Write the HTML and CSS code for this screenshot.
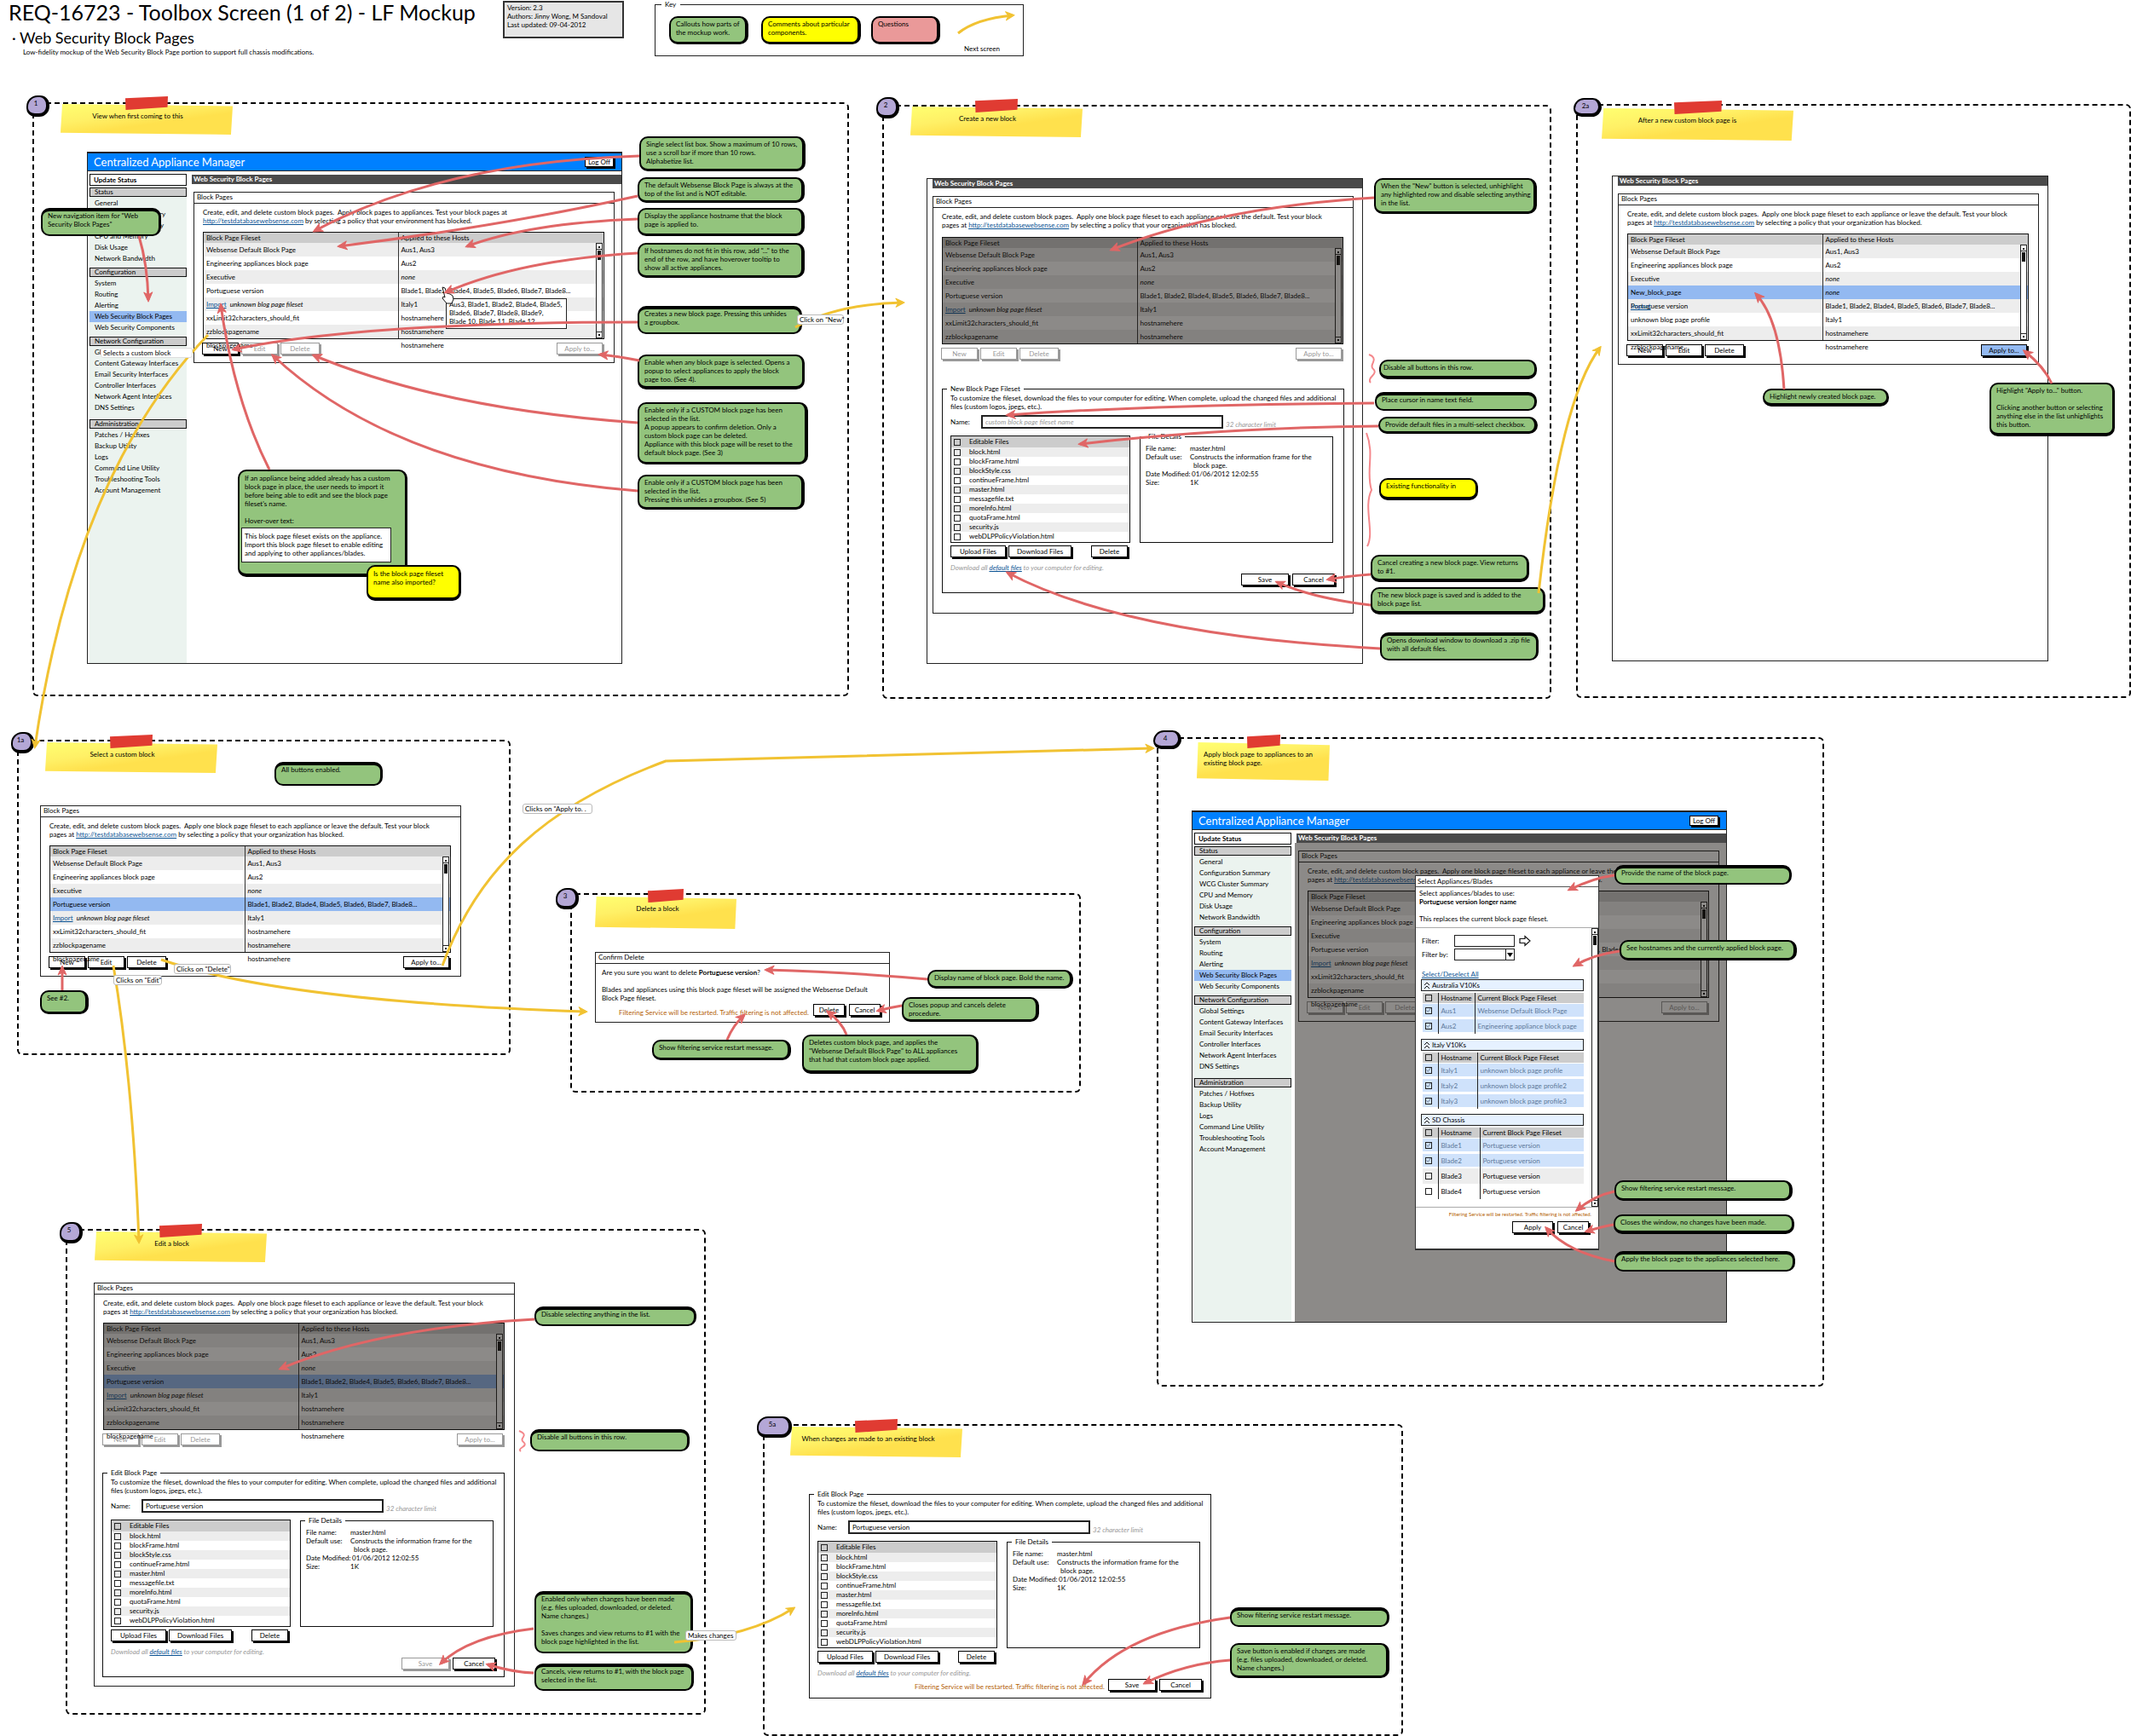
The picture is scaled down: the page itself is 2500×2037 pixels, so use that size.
FILE: index.html
```html
<!DOCTYPE html>
<html lang="en">
<head>
<meta charset="utf-8">
<title>REQ-16723 - Toolbox Screen (1 of 2) - LF Mockup</title>
<link rel="stylesheet" href="styles.css">
</head>
<body>
<div class="board">

<header class="masthead">
  <div class="titles">
    <h1>REQ-16723 - Toolbox Screen (1 of 2) - LF Mockup</h1>
    <h2>· Web Security Block Pages</h2>
    <p>Low-fidelity mockup of the Web Security Block Page portion to support full chassis modifications.</p>
  </div>
  <div class="version">Version: 2.3<br>Authors: Jinny Wong, M Sandoval<br>Last updated: 09-04-2012</div>
  <fieldset class="key">
    <legend>Key</legend>
    <div class="note key-a">Callouts how parts of<br>the mockup work.</div>
    <div class="note yellow key-b">Comments about particular<br>components.</div>
    <div class="note pink key-c">Questions</div>
    <div class="key-next">Next screen</div>
  </fieldset>
</header>

<!-- Step 1 -->
<section>
  <div class="frame f1"></div>
  <div class="sticky st1">View when first coming to this</div>
  <div class="badge b1">1</div>

  <div class="win app w1">
    <header class="app-head"><h3>Centralized Appliance Manager</h3><button class="btn">Log Off</button></header>
    <div class="app-body">
      <nav class="side">
        <div class="update">Update Status</div>
        <h4>Status</h4>
        <ul><li><a href="#">General</a></li><li><a href="#">Configuration Summary</a></li><li><a href="#">WCG Cluster Summary</a></li><li><a href="#">CPU and Memory</a></li><li><a href="#">Disk Usage</a></li><li><a href="#">Network Bandwidth</a></li></ul>
        <h4>Configuration</h4>
        <ul><li><a href="#">System</a></li><li><a href="#">Routing</a></li><li><a href="#">Alerting</a></li><li class="on"><a href="#">Web Security Block Pages</a></li><li><a href="#">Web Security Components</a></li></ul>
        <h4>Network Configuration</h4>
        <ul><li><a href="#">Global Settings</a></li><li><a href="#">Content Gateway Interfaces</a></li><li><a href="#">Email Security Interfaces</a></li><li><a href="#">Controller Interfaces</a></li><li><a href="#">Network Agent Interfaces</a></li><li><a href="#">DNS Settings</a></li></ul>
        <h4 class="admin">Administration</h4>
        <ul><li><a href="#">Patches / Hotfixes</a></li><li><a href="#">Backup Utility</a></li><li><a href="#">Logs</a></li><li><a href="#">Command Line Utility</a></li><li><a href="#">Troubleshooting Tools</a></li><li><a href="#">Account Management</a></li></ul>
      </nav>
      <div class="content">
        <div class="bar">Web Security Block Pages</div>
        <div class="panel">
          <h4>Block Pages</h4>
          <div class="panel-body">
            <p class="intro">Create, edit, and delete custom block pages.&nbsp; Apply block pages to appliances. Test your block pages at<br><a href="#">http://testdatabasewebsense.com</a> by selecting a policy that your environment has blocked.</p>
            <div class="listbox">
              <table>
                <thead><tr><th>Block Page Fileset</th><th>Applied to these Hosts</th></tr></thead>
                <tbody>
                  <tr><td>Websense Default Block Page</td><td>Aus1, Aus3</td></tr>
                  <tr><td>Engineering appliances block page</td><td>Aus2</td></tr>
                  <tr><td>Executive</td><td><i>none</i></td></tr>
                  <tr><td>Portuguese version</td><td>Blade1, Blade2, Blade4, Blade5, Blade6, Blade7, Blade8...</td></tr>
                  <tr><td><a href="#">Import</a>&nbsp; <i>unknown blog page fileset</i></td><td>Italy1</td></tr>
                  <tr><td>xxLimit32characters_should_fit</td><td>hostnamehere</td></tr>
                  <tr><td>zzblockpagename</td><td>hostnamehere</td></tr>
                  <tr class="spill"><td>blockpagename</td><td>hostnamehere</td></tr>
                </tbody>
              </table>
              <div class="scroll"></div>
            </div>
            <div class="actions"><button class="btn">New</button><button class="btn" disabled>Edit</button><button class="btn wide" disabled>Delete</button><button class="btn apply" disabled>Apply to...</button></div>
          </div>
        </div>
      </div>
    </div>
  </div>
  <div class="tip">Aus3, Blade1, Blade2, Blade4, Blade5,<br>Blade6, Blade7, Blade8, Blade9,<br>Blade 10, Blade 11, Blade 12</div>

  <div class="note heavy-top c1-nav">New navigation item for "Web<br>Security Block Pages"</div>
  <div class="note c1-a">Single select list box. Show a maximum of 10 rows,<br>use a scroll bar if more than 10 rows.<br>Alphabetize list.</div>
  <div class="note c1-b">The default Websense Block Page is always at the<br>top of the list and is NOT editable.</div>
  <div class="note c1-c">Display the appliance hostname that the block<br>page is applied to.</div>
  <div class="note c1-d">If hostnames do not fit in this row, add "..." to the<br>end of the row, and have hoverover tooltip to<br>show all active appliances.</div>
  <div class="note heavy-top c1-e">Creates a new block page. Pressing this unhides<br>a groupbox.</div>
  <div class="note heavy-bottom c1-f">Enable when any block page is selected. Opens a<br>popup to select appliances to apply the block<br>page too. (See 4).</div>
  <div class="note c1-g">Enable only if a CUSTOM block page has been<br>selected in the list.<br>A popup appears to confirm deletion. Only a<br>custom block page can be deleted.<br>Appliance with this block page will be reset to the<br>default block page. (See 3)</div>
  <div class="note c1-h">Enable only if a CUSTOM block page has been<br>selected in the list.<br>Pressing this unhides a groupbox. (See 5)</div>
  <div class="note heavy-bottom c1-i">If an appliance being added already has a custom<br>block page in place, the user needs to import it<br>before being able to edit and see the block page<br>fileset's name.<br><br>Hover-over text:
    <div class="hover-text">This block page fileset exists on the appliance.<br>Import this block page fileset to enable editing<br>and applying to other appliances/blades.</div>
  </div>
  <div class="note yellow heavy-bottom c1-j">Is the block page fileset<br>name also imported?</div>
</section>

<!-- Step 2 -->
<section>
  <div class="frame f2"></div>
  <div class="sticky st2">Create a new block</div>
  <div class="badge b2">2</div>

  <div class="win plain w2">
    <div class="bar">Web Security Block Pages</div>
    <div class="panel new-panel">
      <h4>Block Pages</h4>
      <div class="panel-body">
        <p class="intro">Create, edit, and delete custom block pages.&nbsp; Apply one block page fileset to each appliance or leave the default. Test your block<br>pages at <a href="#">http://testdatabasewebsense.com</a> by selecting a policy that your organization has blocked.</p>
        <div class="listbox dim">
          <table>
            <thead><tr><th>Block Page Fileset</th><th>Applied to these Hosts</th></tr></thead>
            <tbody>
              <tr><td>Websense Default Block Page</td><td>Aus1, Aus3</td></tr>
              <tr><td>Engineering appliances block page</td><td>Aus2</td></tr>
              <tr><td>Executive</td><td><i>none</i></td></tr>
              <tr><td>Portuguese version</td><td>Blade1, Blade2, Blade4, Blade5, Blade6, Blade7, Blade8...</td></tr>
              <tr><td><a href="#">Import</a>&nbsp; <i>unknown blog page fileset</i></td><td>Italy1</td></tr>
              <tr><td>xxLimit32characters_should_fit</td><td>hostnamehere</td></tr>
              <tr><td>zzblockpagename</td><td>hostnamehere</td></tr>
            </tbody>
          </table>
          <div class="scroll"></div>
        </div>
        <div class="actions"><button class="btn" disabled>New</button><button class="btn" disabled>Edit</button><button class="btn wide" disabled>Delete</button><button class="btn apply" disabled>Apply to...</button></div>
        <fieldset class="editor">
          <legend>New Block Page Fileset</legend>
          <p>To customize the fileset, download the files to your computer for editing. When complete, upload the changed files and additional<br>files (custom logos, jpegs, etc.).</p>
          <div class="name-row"><label for="name2">Name:</label><input type="text" id="name2" placeholder="custom block page fileset name"><em>32 character limit</em></div>
          <div class="cols">
            <div class="files">
              <label><input type="checkbox">Editable Files</label><label><input type="checkbox">block.html</label><label><input type="checkbox">blockFrame.html</label><label><input type="checkbox">blockStyle.css</label><label><input type="checkbox">continueFrame.html</label><label><input type="checkbox">master.html</label><label><input type="checkbox">messagefile.txt</label><label><input type="checkbox">moreInfo.html</label><label><input type="checkbox">quotaFrame.html</label><label><input type="checkbox">security.js</label><label><input type="checkbox">webDLPPolicyViolation.html</label>
            </div>
            <fieldset class="details">
              <legend>File Details</legend>
              <dl><dt>File name:</dt><dd>master.html</dd><dt>Default use:</dt><dd>Constructs the information frame for the<br>&nbsp; block page.</dd><dt>Date Modified:</dt><dd>&nbsp;01/06/2012 12:02:55</dd><dt>Size:</dt><dd>1K</dd></dl>
            </fieldset>
          </div>
          <div class="file-actions"><button class="btn">Upload Files</button><button class="btn">Download Files</button><button class="btn">Delete</button></div>
          <p class="hint">Download all <a href="#">default files</a> to your computer for editing.</p>
          <div class="submit"><button class="btn save">Save</button><button class="btn cancel">Cancel</button></div>
        </fieldset>
      </div>
    </div>
  </div>

  <div class="note c2-a">When the "New" button is selected, unhighlight<br>any highlighted row and disable selecting anything<br>in the list.</div>
  <div class="note heavy-bottom c2-b">Disable all buttons in this row.</div>
  <div class="note heavy-top c2-c">Place cursor in name text field.</div>
  <div class="note c2-d">Provide default files in a multi-select checkbox.</div>
  <div class="note yellow heavy-bottom c2-e">Existing functionality in</div>
  <div class="note heavy-bottom c2-f">Cancel creating a new block page. View returns<br>to #1.</div>
  <div class="note heavy-bottom c2-g">The new block page is saved and is added to the<br>block page list.</div>
  <div class="note heavy-top c2-h">Opens download window to download a .zip file<br>with all default files.</div>
</section>

<!-- Step 2a -->
<section>
  <div class="frame f2a"></div>
  <div class="sticky st2a">After a new custom block page is</div>
  <div class="badge b2a">2a</div>

  <div class="win plain w2a">
    <div class="bar">Web Security Block Pages</div>
    <div class="panel">
      <h4>Block Pages</h4>
      <div class="panel-body">
        <p class="intro">Create, edit, and delete custom block pages.&nbsp; Apply one block page fileset to each appliance or leave the default. Test your block<br>pages at <a href="#">http://testdatabasewebsense.com</a> by selecting a policy that your organization has blocked.</p>
        <div class="listbox">
          <table>
            <thead><tr><th>Block Page Fileset</th><th>Applied to these Hosts</th></tr></thead>
            <tbody>
              <tr><td>Websense Default Block Page</td><td>Aus1, Aus3</td></tr>
              <tr><td>Engineering appliances block page</td><td>Aus2</td></tr>
              <tr><td>Executive</td><td><i>none</i></td></tr>
              <tr class="on"><td>New_block_page</td><td><i>none</i></td></tr>
              <tr><td class="stacked"><a href="#">Import</a>Portuguese version</td><td>Blade1, Blade2, Blade4, Blade5, Blade6, Blade7, Blade8...</td></tr>
              <tr><td>unknown blog page profile</td><td>Italy1</td></tr>
              <tr><td>xxLimit32characters_should_fit</td><td>hostnamehere</td></tr>
              <tr class="spill"><td>zzblockpagename</td><td>hostnamehere</td></tr>
            </tbody>
          </table>
          <div class="scroll"></div>
        </div>
        <div class="actions"><button class="btn">New</button><button class="btn">Edit</button><button class="btn wide">Delete</button><button class="btn apply lit">Apply to...</button></div>
      </div>
    </div>
  </div>
  <div class="note heavy-bottom c2a-a">Highlight newly created block page.</div>
  <div class="note heavy-bottom c2a-b">Highlight "Apply to..." button.<br><br>Clicking another button or selecting<br>anything else in the list unhighlights<br>this button.</div>
</section>

<!-- Step 1a -->
<section>
  <div class="frame f1a"></div>
  <div class="sticky st1a">Select a custom block</div>
  <div class="badge b1a">1a</div>
  <div class="panel free p1a">
    <h4>Block Pages</h4>
    <div class="panel-body">
      <p class="intro">Create, edit, and delete custom block pages.&nbsp; Apply one block page fileset to each appliance or leave the default. Test your block<br>pages at <a href="#">http://testdatabasewebsense.com</a> by selecting a policy that your organization has blocked.</p>
      <div class="listbox">
        <table>
          <thead><tr><th>Block Page Fileset</th><th>Applied to these Hosts</th></tr></thead>
          <tbody>
            <tr><td>Websense Default Block Page</td><td>Aus1, Aus3</td></tr>
            <tr><td>Engineering appliances block page</td><td>Aus2</td></tr>
            <tr><td>Executive</td><td><i>none</i></td></tr>
            <tr class="on"><td>Portuguese version</td><td>Blade1, Blade2, Blade4, Blade5, Blade6, Blade7, Blade8...</td></tr>
            <tr><td><a href="#">Import</a>&nbsp; <i>unknown blog page fileset</i></td><td>Italy1</td></tr>
            <tr><td>xxLimit32characters_should_fit</td><td>hostnamehere</td></tr>
            <tr><td>zzblockpagename</td><td>hostnamehere</td></tr>
            <tr class="spill"><td>blockpagename</td><td>hostnamehere</td></tr>
          </tbody>
        </table>
        <div class="scroll"></div>
      </div>
      <div class="actions"><button class="btn">New</button><button class="btn">Edit</button><button class="btn wide">Delete</button><button class="btn apply">Apply to...</button></div>
    </div>
  </div>
  <div class="note heavy-top c1a-a">All buttons enabled.</div>
  <div class="note c1a-b">See #2.</div>
</section>

<!-- Step 3 -->
<section>
  <div class="frame f3"></div>
  <div class="sticky st3">Delete a block</div>
  <div class="badge b3">3</div>
  <div class="panel free confirm">
    <h4>Confirm Delete</h4>
    <p>Are you sure you want to delete <b>Portuguese version</b>?<br><br>Blades and appliances using this block page fileset will be assigned the Websense Default<br>Block Page fileset.</p>
    <div class="confirm-foot"><span class="warn">Filtering Service will be restarted. Traffic filtering is not affected.</span><button class="btn">Delete</button><button class="btn">Cancel</button></div>
  </div>
  <div class="note c3-a">Display name of block page. Bold the name.</div>
  <div class="note c3-b">Closes popup and cancels delete<br>procedure.</div>
  <div class="note c3-c">Show filtering service restart message.</div>
  <div class="note heavy-bottom c3-d">Deletes custom block page, and applies the<br>"Websense Default Block Page" to ALL appliances<br>that had that custom block page applied.</div>
</section>

<!-- Step 4 -->
<section>
  <div class="frame f4"></div>
  <div class="sticky left st4">Apply block page to appliances to an<br>existing block page.</div>
  <div class="badge b4">4</div>

  <div class="win app w4">
    <header class="app-head"><h3>Centralized Appliance Manager</h3><button class="btn">Log Off</button></header>
    <div class="app-body">
      <nav class="side">
        <div class="update">Update Status</div>
        <h4>Status</h4>
        <ul><li><a href="#">General</a></li><li><a href="#">Configuration Summary</a></li><li><a href="#">WCG Cluster Summary</a></li><li><a href="#">CPU and Memory</a></li><li><a href="#">Disk Usage</a></li><li><a href="#">Network Bandwidth</a></li></ul>
        <h4>Configuration</h4>
        <ul><li><a href="#">System</a></li><li><a href="#">Routing</a></li><li><a href="#">Alerting</a></li><li class="on"><a href="#">Web Security Block Pages</a></li><li><a href="#">Web Security Components</a></li></ul>
        <h4>Network Configuration</h4>
        <ul><li><a href="#">Global Settings</a></li><li><a href="#">Content Gateway Interfaces</a></li><li><a href="#">Email Security Interfaces</a></li><li><a href="#">Controller Interfaces</a></li><li><a href="#">Network Agent Interfaces</a></li><li><a href="#">DNS Settings</a></li></ul>
        <h4 class="admin">Administration</h4>
        <ul><li><a href="#">Patches / Hotfixes</a></li><li><a href="#">Backup Utility</a></li><li><a href="#">Logs</a></li><li><a href="#">Command Line Utility</a></li><li><a href="#">Troubleshooting Tools</a></li><li><a href="#">Account Management</a></li></ul>
      </nav>
      <div class="content dimmed">
        <div class="bar">Web Security Block Pages</div>
        <div class="panel">
          <h4>Block Pages</h4>
          <div class="panel-body">
            <p class="intro">Create, edit, and delete custom block pages.&nbsp; Apply one block page fileset to each appliance or leave the default. Test your block<br>pages at <a href="#">http://testdatabasewebsense.com</a> by selecting a policy that your organization has blocked.</p>
            <div class="listbox">
              <table>
                <thead><tr><th>Block Page Fileset</th><th>Applied to these Hosts</th></tr></thead>
                <tbody>
                  <tr><td>Websense Default Block Page</td><td>Aus1, Aus3</td></tr>
                  <tr><td>Engineering appliances block page</td><td>Aus2</td></tr>
                  <tr><td>Executive</td><td><i>none</i></td></tr>
                  <tr><td>Portuguese version</td><td>Blade1, Blade2, Blade4, Blade5, Blade6, Blade7, Blade8...</td></tr>
                  <tr><td><a href="#">Import</a>&nbsp; <i>unknown blog page fileset</i></td><td>Italy1</td></tr>
                  <tr><td>xxLimit32characters_should_fit</td><td>hostnamehere</td></tr>
                  <tr><td>zzblockpagename</td><td>hostnamehere</td></tr>
                  <tr class="spill"><td>blockpagename</td><td></td></tr>
                </tbody>
              </table>
              <div class="scroll"></div>
            </div>
            <div class="actions"><button class="btn" disabled>New</button><button class="btn" disabled>Edit</button><button class="btn wide" disabled>Delete</button><button class="btn apply" disabled>Apply to...</button></div>
          </div>
        </div>
      </div>
    </div>
  </div>

  <div class="modal">
    <h4>Select Appliances/Blades</h4>
    <p class="modal-intro">Select appliances/blades to use:<br><b>Portuguese version longer name</b><br><br>This replaces the current block page fileset.</p>
    <div class="modal-scroll">
      <div class="filter"><label for="filter">Filter:</label><input type="text" id="filter"><svg width="14" height="14" viewBox="0 0 14 14"><path d="M1 4.500h6V1.500l6 5.500-6 5.500v-3H1z" fill="#fff" stroke="#111" stroke-width="1.200"/></svg></div>
      <div class="filter"><label for="filterby">Filter by:</label><select id="filterby"><option></option></select></div>
      <a class="all" href="#">Select/Deselect All</a>
      <h5><svg width="8" height="10" viewBox="0 0 8 10"><path d="M1 5l3-3 3 3M1 9l3-3 3 3" fill="none" stroke="#111"/></svg>Australia V10Ks</h5>
      <table class="hosts">
        <thead><tr><th><input type="checkbox" aria-label="All Australia"></th><th>Hostname</th><th>Current Block Page Fileset</th></tr></thead>
        <tbody>
          <tr class="sel"><td><input type="checkbox" checked aria-label="Aus1"></td><td>Aus1</td><td>Websense Default Block Page</td></tr>
          <tr class="sel"><td><input type="checkbox" checked aria-label="Aus2"></td><td>Aus2</td><td>Engineering appliance block page</td></tr>
        </tbody>
      </table>
      <h5><svg width="8" height="10" viewBox="0 0 8 10"><path d="M1 5l3-3 3 3M1 9l3-3 3 3" fill="none" stroke="#111"/></svg>Italy V10Ks</h5>
      <table class="hosts mid">
        <thead><tr><th><input type="checkbox" aria-label="All Italy"></th><th>Hostname</th><th>Current Block Page Fileset</th></tr></thead>
        <tbody>
          <tr class="sel"><td><input type="checkbox" checked aria-label="Italy1"></td><td>Italy1</td><td>unknown block page profile</td></tr>
          <tr class="sel"><td><input type="checkbox" checked aria-label="Italy2"></td><td>Italy2</td><td>unknown block page profile2</td></tr>
          <tr class="sel"><td><input type="checkbox" checked aria-label="Italy3"></td><td>Italy3</td><td>unknown block page profile3</td></tr>
        </tbody>
      </table>
      <h5><svg width="8" height="10" viewBox="0 0 8 10"><path d="M1 5l3-3 3 3M1 9l3-3 3 3" fill="none" stroke="#111"/></svg>SD Chassis</h5>
      <table class="hosts last">
        <thead><tr><th><input type="checkbox" aria-label="All SD Chassis"></th><th>Hostname</th><th>Current Block Page Fileset</th></tr></thead>
        <tbody>
          <tr class="sel"><td><input type="checkbox" checked aria-label="Blade1"></td><td>Blade1</td><td>Portuguese version</td></tr>
          <tr class="sel"><td><input type="checkbox" checked aria-label="Blade2"></td><td>Blade2</td><td>Portuguese version</td></tr>
          <tr class="alt"><td><input type="checkbox" aria-label="Blade3"></td><td>Blade3</td><td>Portuguese version</td></tr>
          <tr><td><input type="checkbox" aria-label="Blade4"></td><td>Blade4</td><td>Portuguese version</td></tr>
        </tbody>
      </table>
      <div class="scroll"></div>
    </div>
    <p class="warn small">Filtering Service will be restarted. Traffic filtering is not affected.</p>
    <div class="modal-foot"><button class="btn">Apply</button><button class="btn">Cancel</button></div>
  </div>

  <div class="note heavy-top c4-a">Provide the name of the block page.</div>
  <div class="note c4-b">See hostnames and the currently applied block page.</div>
  <div class="note c4-c">Show filtering service restart message.</div>
  <div class="note heavy-bottom c4-d">Closes the window, no changes have been made.</div>
  <div class="note heavy-top c4-e">Apply the block page to the appliances selected here.</div>
</section>

<!-- Step 5 -->
<section>
  <div class="frame f5"></div>
  <div class="sticky st5">Edit a block</div>
  <div class="badge b5">5</div>
  <div class="panel free edit-panel">
    <h4>Block Pages</h4>
    <div class="panel-body">
      <p class="intro">Create, edit, and delete custom block pages.&nbsp; Apply one block page fileset to each appliance or leave the default. Test your block<br>pages at <a href="#">http://testdatabasewebsense.com</a> by selecting a policy that your organization has blocked.</p>
      <div class="listbox dim">
        <table>
          <thead><tr><th>Block Page Fileset</th><th>Applied to these Hosts</th></tr></thead>
          <tbody>
            <tr><td>Websense Default Block Page</td><td>Aus1, Aus3</td></tr>
            <tr><td>Engineering appliances block page</td><td>Aus2</td></tr>
            <tr><td>Executive</td><td><i>none</i></td></tr>
            <tr class="on"><td>Portuguese version</td><td>Blade1, Blade2, Blade4, Blade5, Blade6, Blade7, Blade8...</td></tr>
            <tr><td><a href="#">Import</a>&nbsp; <i>unknown blog page fileset</i></td><td>Italy1</td></tr>
            <tr><td>xxLimit32characters_should_fit</td><td>hostnamehere</td></tr>
            <tr><td>zzblockpagename</td><td>hostnamehere</td></tr>
            <tr class="spill"><td>blockpagename</td><td>hostnamehere</td></tr>
          </tbody>
        </table>
        <div class="scroll"></div>
      </div>
      <div class="actions"><button class="btn" disabled>New</button><button class="btn" disabled>Edit</button><button class="btn wide" disabled>Delete</button><button class="btn apply" disabled>Apply to...</button></div>
      <fieldset class="editor">
        <legend>Edit Block Page</legend>
        <p>To customize the fileset, download the files to your computer for editing. When complete, upload the changed files and additional<br>files (custom logos, jpegs, etc.).</p>
        <div class="name-row"><label for="name5">Name:</label><input type="text" id="name5" value="Portuguese version"><em>32 character limit</em></div>
        <div class="cols">
          <div class="files">
            <label><input type="checkbox">Editable Files</label><label><input type="checkbox">block.html</label><label><input type="checkbox">blockFrame.html</label><label><input type="checkbox">blockStyle.css</label><label><input type="checkbox">continueFrame.html</label><label><input type="checkbox">master.html</label><label><input type="checkbox">messagefile.txt</label><label><input type="checkbox">moreInfo.html</label><label><input type="checkbox">quotaFrame.html</label><label><input type="checkbox">security.js</label><label><input type="checkbox">webDLPPolicyViolation.html</label>
          </div>
          <fieldset class="details">
            <legend>File Details</legend>
            <dl><dt>File name:</dt><dd>master.html</dd><dt>Default use:</dt><dd>Constructs the information frame for the<br>&nbsp; block page.</dd><dt>Date Modified:</dt><dd>&nbsp;01/06/2012 12:02:55</dd><dt>Size:</dt><dd>1K</dd></dl>
          </fieldset>
        </div>
        <div class="file-actions"><button class="btn">Upload Files</button><button class="btn">Download Files</button><button class="btn">Delete</button></div>
        <p class="hint">Download all <a href="#">default files</a> to your computer for editing.</p>
        <div class="submit"><button class="btn save" disabled>Save</button><button class="btn cancel">Cancel</button></div>
      </fieldset>
    </div>
  </div>
  <div class="note heavy-top c5-a">Disable selecting anything in the list.</div>
  <div class="note heavy-top c5-b">Disable all buttons in this row.</div>
  <div class="note heavy-top c5-c">Enabled only when changes have been made<br>(e.g. files uploaded, downloaded, or deleted.<br>Name changes.)<br><br>Saves changes and view returns to #1 with the<br>block page highlighted in the list.</div>
  <div class="note heavy-top c5-d">Cancels, view returns to #1, with the block page<br>selected in the list.</div>
</section>

<!-- Step 5a -->
<section>
  <div class="frame f5a"></div>
  <div class="sticky st5a">When changes are made to an existing block</div>
  <div class="badge b5a">5a</div>
  <fieldset class="editor lone">
    <legend>Edit Block Page</legend>
    <p>To customize the fileset, download the files to your computer for editing. When complete, upload the changed files and additional<br>files (custom logos, jpegs, etc.).</p>
    <div class="name-row"><label for="name5a">Name:</label><input type="text" id="name5a" value="Portuguese version"><em>32 character limit</em></div>
    <div class="cols">
      <div class="files">
        <label><input type="checkbox">Editable Files</label><label><input type="checkbox">block.html</label><label><input type="checkbox">blockFrame.html</label><label><input type="checkbox">blockStyle.css</label><label><input type="checkbox">continueFrame.html</label><label><input type="checkbox">master.html</label><label><input type="checkbox">messagefile.txt</label><label><input type="checkbox">moreInfo.html</label><label><input type="checkbox">quotaFrame.html</label><label><input type="checkbox">security.js</label><label><input type="checkbox">webDLPPolicyViolation.html</label>
      </div>
      <fieldset class="details">
        <legend>File Details</legend>
        <dl><dt>File name:</dt><dd>master.html</dd><dt>Default use:</dt><dd>Constructs the information frame for the<br>&nbsp; block page.</dd><dt>Date Modified:</dt><dd>&nbsp;01/06/2012 12:02:55</dd><dt>Size:</dt><dd>1K</dd></dl>
      </fieldset>
    </div>
    <div class="file-actions"><button class="btn">Upload Files</button><button class="btn">Download Files</button><button class="btn">Delete</button></div>
    <p class="hint">Download all <a href="#">default files</a> to your computer for editing.</p>
    <div class="submit"><span class="warn">Filtering Service will be restarted. Traffic filtering is not affected.</span><button class="btn save">Save</button><button class="btn cancel">Cancel</button></div>
  </fieldset>
  <div class="note heavy-top c5a-a">Show filtering service restart message.</div>
  <div class="note c5a-b">Save button is enabled if changes are made<br>(e.g. files uploaded, downloaded, or deleted.<br>Name changes.)</div>
</section>

<!-- Connectors between notes, controls and screens -->
<svg class="wires" width="2500" height="2037" viewBox="0 0 2500 2037" aria-hidden="true">
  <defs>
    <marker id="red-head" markerUnits="userSpaceOnUse" markerWidth="14" markerHeight="14" refX="10" refY="6" orient="auto"><path d="M1 1L12 6 1 11 4 6z" fill="#e06666" stroke="#e06666" stroke-linejoin="round"/></marker>
    <marker id="gold-head" markerUnits="userSpaceOnUse" markerWidth="14" markerHeight="14" refX="10" refY="6" orient="auto"><path d="M2 1L12 6 2 11 5 6z" fill="#f1c232" stroke="#f1c232" stroke-linejoin="round"/></marker>
  </defs>
  <path d="M519 337l3 1 2 6 4 1 3 2 1 4-2 5h-6l-5-6 1-2 2 1z" fill="#fff" stroke="#111"/>
  <g class="red">
    <path d="M163 277Q173 310 174 352"/>
    <path d="M750 183Q520 190 369 271"/>
    <path d="M748 230Q590 265 398 289"/>
    <path d="M748 257Q620 262 548 289"/>
    <path d="M748 297Q610 305 523 343"/>
    <path d="M748 378Q430 378 274 410"/>
    <path d="M750 423Q725 418 704 416"/>
    <path d="M748 496Q520 480 368 417"/>
    <path d="M748 576Q465 553 320 417"/>
    <path d="M316 551Q275 470 259 358"/>
    <path d="M1612 232Q1430 243 1304 293"/>
    <path d="M1612 473Q1350 475 1182 487"/>
    <path d="M1617 500Q1430 502 1267 521"/>
    <path d="M1608 674Q1580 676 1558 680"/>
    <path d="M1608 710Q1540 702 1498 683"/>
    <path d="M1619 761Q1320 745 1182 672"/>
    <path d="M2093 457Q2088 375 2060 345"/>
    <path d="M2407 450Q2398 430 2375 412"/>
    <path d="M73 1162V1135"/>
    <path d="M1088 1149Q1000 1141 899 1138"/>
    <path d="M1058 1180Q1045 1182 1030 1186"/>
    <path d="M853 1220Q860 1203 873 1191"/>
    <path d="M993 1214Q988 1200 971 1187"/>
    <path d="M1894 1027Q1870 1030 1841 1044"/>
    <path d="M1900 1116Q1870 1120 1847 1133"/>
    <path d="M1894 1398Q1870 1403 1850 1420"/>
    <path d="M1893 1437Q1880 1439 1861 1445"/>
    <path d="M1894 1480Q1840 1470 1814 1441"/>
    <path d="M627 1548Q445 1558 329 1606"/>
    <path d="M626 1911Q550 1920 517 1952"/>
    <path d="M626 1963Q600 1962 572 1953"/>
    <path d="M1443 1898Q1320 1915 1271 1976"/>
    <path d="M1443 1948Q1390 1952 1343 1975"/>
  </g>
  <g class="gold">
    <path d="M1124 39Q1145 22 1188 18"/>
    <path d="M933 384Q980 357 1059 355"/>
    <path d="M244 393Q88 555 41 876"/>
    <path d="M1805 696Q1830 470 1877 408"/>
    <path d="M519 1133C560 1020 640 945 781 893L1352 878"/>
    <path d="M189 1126Q330 1175 687 1187"/>
    <path d="M133 1133Q156 1270 163 1457"/>
    <path d="M791 1927Q880 1920 931 1887"/>
  </g>
  <g class="squiggle">
    <path d="M1606 416q8 3 5 9t0 8q4 3-1 8t-2 8"/>
    <path d="M1603 508c10 25-1 45 6 67-10 20 4 50-5 66"/>
    <path d="M609 1679q8 3 5 7t0 6q4 3-1 6t-2 5"/>
  </g>
</svg>

<div class="tag t-select">Selects a custom block</div>
<div class="tag t-new">Click on "New"</div>
<div class="tag t-edit">Clicks on "Edit"</div>
<div class="tag t-delete">Clicks on "Delete"</div>
<div class="tag t-apply">Clicks on "Apply to. .</div>
<div class="tag t-makes">Makes changes</div>

</div>
</body>
</html>
```
FILE: styles.css
```css
* { box-sizing: border-box; }

body {
  margin: 0;
  background: #fff;
  color: #000;
  font: 8px/10px Lato, "Liberation Sans", sans-serif;
}

h1, h2, h3, h4, h5, p, ul, dl, dd { margin: 0; padding: 0; font-weight: normal; font-size: inherit; }
ul { list-style: none; }
a { color: #0b5394; }
input, select, button { font: inherit; color: inherit; }

.board { position: relative; min-height: 2037px; overflow-x: hidden; white-space: nowrap; }

/* Masthead */
.masthead { display: flex; align-items: flex-start; }
.titles { width: 590px; padding-left: 10px; }
.titles h1 { font-size: 25px; line-height: 28px; }
.titles h2 { padding-left: 4px; margin-top: 6px; font-size: 18px; line-height: 20px; }
.titles p { padding-left: 17px; margin-top: 2px; }
.version { width: 142px; height: 44px; margin: 1px 36px 0 0; padding: 1px 3px; background: #e6e6e6; border: 2px solid #333; }

.key { display: flex; align-items: flex-start; width: 433px; height: 66px; margin: 0; padding: 9px 0 0 16px; border: 1px solid #222; min-inline-size: 0; }
.key legend { margin-left: -9px; padding: 0 5px 0 4px; }
.key .note { position: static; }
.key-a { width: 93px; min-height: 33px; margin-right: 15px; }
.key-b { width: 117px; min-height: 33px; margin-right: 12px; }
.key-c { width: 81px; min-height: 33px; }
.key-next { margin: 33px 0 0 28px; }

/* Dashed step frames */
.frame { position: absolute; border: 2px dashed #000; border-radius: 6px; }
.f1 { left: 38px; top: 120px; width: 958px; height: 697px; }
.f2 { left: 1035px; top: 123px; width: 785px; height: 697px; }
.f2a { left: 1849px; top: 122px; width: 651px; height: 697px; }
.f1a { left: 20px; top: 868px; width: 579px; height: 370px; }
.f3 { left: 669px; top: 1048px; width: 599px; height: 234px; }
.f4 { left: 1357px; top: 865px; width: 783px; height: 762px; }
.f5 { left: 77px; top: 1442px; width: 751px; height: 570px; }
.f5a { left: 895px; top: 1671px; width: 751px; height: 366px; }

/* Numbered badges */
.badge { position: absolute; width: 27px; height: 25px; padding: 2px 3px 0 0; text-align: center; background: #b4a7d6; border: solid #000; border-width: 2px 4px 4px 2px; border-radius: 13px 11px 12px 10px; }
.b1 { left: 31px; top: 112px; }
.b2 { left: 1028px; top: 114px; }
.b2a { left: 1846px; top: 115px; width: 33px; height: 22px; }
.b1a { left: 13px; top: 859px; }
.b3 { left: 652px; top: 1042px; }
.b4 { left: 1353px; top: 857px; width: 33px; height: 22px; }
.b5 { left: 70px; top: 1434px; }
.b5a { left: 888px; top: 1662px; width: 41px; }

/* Taped paper labels */
.sticky { position: absolute; z-index: 0; width: 202px; height: 36px; padding-top: 9px; text-align: center; }
.sticky::before { content: ""; position: absolute; z-index: -1; inset: 0; background: linear-gradient(172deg, #ffff70 0, #fff066 35%, #ffe14d 60%); clip-path: polygon(1% 0, 100% 7%, 99% 100%, 0 94%); }
.sticky::after { content: ""; position: absolute; left: 76px; top: -9px; width: 50px; height: 16px; background: #e03b32; clip-path: polygon(0 14%, 100% 0, 99% 80%, 1% 100%); }
.sticky.left { padding-left: 8px; text-align: left; }
.st1 { left: 71px; top: 122px; padding-right: 21px; }
.st2 { left: 1068px; top: 125px; padding-right: 21px; }
.st2a { left: 1879px; top: 127px; width: 225px; height: 38px; padding-right: 24px; }
.st2a::after { left: 85px; width: 56px; }
.st1a { left: 53px; top: 871px; padding-right: 21px; }
.st3 { left: 698px; top: 1052px; width: 166px; height: 38px; padding-right: 19px; }
.st3::after { left: 62px; width: 42px; }
.st4 { left: 1404px; top: 871px; width: 156px; height: 45px; }
.st4::after { left: 59px; width: 39px; }
.st5 { left: 111px; top: 1445px; padding-right: 21px; }
.st5a { left: 927px; top: 1674px; padding-right: 19px; }

/* Callout notes */
.note { position: absolute; padding: 2px 0 0 6px; background: #93c47d; border: solid #000; border-width: 2px 4px 3px 2px; border-radius: 10px; }
.note.yellow { background: #ff0; }
.note.pink { background: #ea9999; }
.note.heavy-top { border-width: 4px 3px 2px 2px; padding-top: 0; }
.note.heavy-bottom { border-width: 2px 3px 4px 2px; }
.c1-nav { left: 48px; top: 244px; width: 141px; min-height: 33px; }
.c1-a { left: 750px; top: 160px; width: 195px; min-height: 41px; }
.c1-b { left: 748px; top: 208px; width: 196px; min-height: 30px; }
.c1-c { left: 748px; top: 244px; width: 196px; min-height: 33px; }
.c1-d { left: 748px; top: 285px; width: 196px; min-height: 41px; }
.c1-e { left: 748px; top: 359px; width: 193px; min-height: 33px; }
.c1-f { left: 748px; top: 416px; width: 196px; min-height: 41px; }
.c1-g { left: 748px; top: 472px; width: 200px; min-height: 73px; }
.c1-h { left: 748px; top: 557px; width: 196px; min-height: 41px; }
.c1-i { left: 279px; top: 551px; width: 199px; min-height: 126px; padding-top: 3px; }
.hover-text { width: 176px; height: 41px; margin: 3px 0 0 -4px; padding: 4px 3px; background: #fff; border: 1px solid #222; }
.c1-j { left: 430px; top: 663px; width: 111px; min-height: 42px; padding-top: 3px; }
.c2-a { left: 1612px; top: 209px; width: 191px; min-height: 42px; }
.c2-b { left: 1618px; top: 422px; width: 185px; min-height: 23px; padding-left: 3px; }
.c2-c { left: 1613px; top: 460px; width: 190px; min-height: 22px; }
.c2-d { left: 1617px; top: 489px; width: 187px; min-height: 20px; }
.c2-e { left: 1618px; top: 561px; width: 116px; min-height: 26px; }
.c2-f { left: 1608px; top: 651px; width: 186px; min-height: 32px; }
.c2-g { left: 1608px; top: 689px; width: 205px; min-height: 32px; }
.c2-h { left: 1619px; top: 742px; width: 186px; min-height: 33px; }
.c2a-a { left: 2068px; top: 456px; width: 148px; min-height: 21px; }
.c2a-b { left: 2334px; top: 449px; width: 147px; min-height: 63px; }
.c1a-a { left: 322px; top: 894px; width: 127px; min-height: 28px; }
.c1a-b { left: 47px; top: 1162px; width: 57px; min-height: 28px; }
.c3-a { left: 1088px; top: 1138px; width: 171px; min-height: 22px; }
.c3-b { left: 1058px; top: 1170px; width: 161px; min-height: 29px; }
.c3-c { left: 765px; top: 1220px; width: 163px; min-height: 24px; }
.c3-d { left: 941px; top: 1214px; width: 207px; min-height: 46px; }
.c4-a { left: 1894px; top: 1015px; width: 208px; min-height: 23px; }
.c4-b { left: 1900px; top: 1103px; width: 208px; min-height: 24px; }
.c4-c { left: 1894px; top: 1385px; width: 209px; min-height: 24px; }
.c4-d { left: 1893px; top: 1425px; width: 212px; min-height: 23px; }
.c4-e { left: 1894px; top: 1468px; width: 212px; min-height: 24px; }
.c5-a { left: 627px; top: 1533px; width: 190px; min-height: 23px; }
.c5-b { left: 622px; top: 1677px; width: 187px; min-height: 26px; }
.c5-c { left: 627px; top: 1867px; width: 186px; min-height: 73px; }
.c5-d { left: 627px; top: 1952px; width: 187px; min-height: 32px; }
.c5a-a { left: 1443px; top: 1886px; width: 187px; min-height: 23px; }
.c5a-b { left: 1443px; top: 1928px; width: 187px; min-height: 41px; }

/* Transition labels */
.tag { position: absolute; height: 12px; padding: 0 2px; background: #fff; border: 1px solid #bbb; border-radius: 3px; }
.t-select { left: 118px; top: 408px; width: 108px; border-color: #ddd; }
.t-new { left: 935px; top: 369px; width: 55px; }
.t-edit { left: 133px; top: 1144px; width: 57px; }
.t-delete { left: 204px; top: 1131px; width: 67px; }
.t-apply { left: 613px; top: 943px; width: 82px; }
.t-makes { left: 804px; top: 1913px; width: 60px; }

/* Application windows */
.win { position: absolute; border: 1px solid #222; background: #fff; }
.app { display: flex; flex-direction: column; width: 628px; height: 601px; }
.w1 { left: 102px; top: 178px; }
.w4 { left: 1398px; top: 951px; }
.app-head { display: flex; align-items: center; justify-content: space-between; height: 22px; padding: 0 9px 0 7px; background: #0080ff; border: solid #222; border-width: 1px 0; color: #fff; }
.app-head h3 { font-size: 13px; line-height: 16px; }
.app-head .btn { width: 34px; height: 12px; line-height: 10px; color: #000; }
.app-body { display: flex; flex: 1; gap: 6px; padding: 3px 0 0 2px; }
.side { width: 114px; background: #ebf3ef; }
.update { height: 14px; margin-bottom: 2px; padding-left: 4px; line-height: 12px; font-weight: bold; background: #fff; border: 1px solid #111; }
.side h4 { height: 11px; margin-bottom: 1px; padding-left: 5px; line-height: 9px; background: #ccc; border: 1px solid #111; }
.side ul { margin-bottom: 4px; }
.side .admin { margin-top: 7px; }
.side li { height: 13px; padding-left: 6px; line-height: 12px; }
.side li.on { background: #93b9f1; }
.side a { color: inherit; text-decoration: none; }
.content { flex: 1; position: relative; padding-top: 1px; }
.content .panel { margin-left: 2px; }
.content.dimmed::after { content: ""; position: absolute; inset: 12px 0 0 -2px; background: rgba(25, 22, 18, 0.5); pointer-events: none; }
.bar { height: 11px; padding-left: 2px; line-height: 10px; background: #4a4a4a; color: #fff; font-weight: bold; }
.plain { width: 512px; height: 570px; padding-left: 6px; }
.w2 { left: 1087px; top: 209px; }
.w2a { left: 1891px; top: 206px; }

/* Block Pages panel */
.panel { isolation: isolate; width: 494px; margin-top: 9px; background: #fff; border: 1px solid #222; }
.panel.free { position: absolute; margin: 0; }
.panel h4 { height: 13px; padding-left: 3px; line-height: 11px; border-bottom: 1px solid #222; }
.panel-body { padding: 5px 11px 9px 10px; }
.intro { margin-bottom: 8px; }
.new-panel { min-height: 490px; }
.new-panel .intro { margin-bottom: 9px; }
.p1a { left: 47px; top: 945px; }
.edit-panel { left: 110px; top: 1505px; min-height: 474px; }

.listbox { position: relative; height: 126px; border: 1px solid #111; }
.listbox table { width: 100%; table-layout: fixed; border-collapse: collapse; }
.listbox th { height: 12px; padding: 0 3px; text-align: left; font-weight: normal; background: #ccc; }
.listbox td { height: 16px; padding: 0 3px; }
.listbox th + th, .listbox td + td { border-left: 1px solid #333; }
.listbox th:first-child { width: 228px; }
.listbox tr:nth-child(odd) td { background: #ededed; }
.listbox tr.on td { background: #93b9f1; }
.listbox tr.spill td { border-color: transparent; background: none; }
.listbox.dim::after { content: ""; position: absolute; inset: 0; background: rgba(25, 22, 18, 0.5); pointer-events: none; }
.stacked a { position: absolute; }
.spill { position: relative; z-index: 1; }

.scroll { position: absolute; right: 1px; top: 12px; bottom: 0; width: 8px; border: 1px solid #222; background:
  linear-gradient(#111, #111) 1px 8px / 4px 11px no-repeat,
  linear-gradient(#111, #111) 2px 3px / 2px 2px no-repeat,
  linear-gradient(#111, #111) 2px calc(100% - 2px) / 2px 2px no-repeat,
  linear-gradient(#222, #222) 0 6px / 6px 1px no-repeat,
  linear-gradient(#222, #222) 0 calc(100% - 6px) / 6px 1px no-repeat,
  #fff; }

.btn { width: 43px; height: 14px; padding: 0; text-align: center; line-height: 12px; background: #fff; border: 1px solid #000; box-shadow: 2px 2px 0 #000; }
.btn:disabled { color: #999; border-color: #999; box-shadow: 2px 2px 0 #999; background: transparent; }
.btn.lit { background: #93b9f1; }
.btn.wide { width: 46px; }
.actions { display: flex; gap: 3px; margin: 4px 0 0 -1px; }
.actions .apply { width: 54px; margin-left: auto; margin-right: 2px; }

/* Fileset editor */
.editor { width: 472px; margin: 0; padding: 1px 8px 8px 9px; border: 1px solid #111; min-inline-size: 0; }
.editor legend { margin-left: -4px; padding: 0 4px; }
.new-panel .editor { margin-top: 29px; }
.edit-panel .editor { margin: 27px 0 0 -1px; }
.editor.lone { position: absolute; left: 949px; top: 1748px; }
.name-row { display: flex; align-items: center; margin-top: 5px; }
.name-row label { width: 36px; }
.name-row input { width: 284px; height: 16px; margin-right: 3px; padding: 0 3px; background: #fff; border: 2px solid #222; }
.name-row input::placeholder { color: #999; font-style: italic; }
.name-row em { margin-top: 6px; color: #999; }
.cols { display: flex; gap: 11px; margin-top: 8px; }
.files { display: flex; flex-direction: column; width: 211px; height: 126px; border: 1px solid #111; }
.files label { display: flex; align-items: center; gap: 10px; height: 11px; padding-left: 3px; line-height: 9px; }
.files label:first-child { height: 13px; background: #ccc; }
.files label:nth-child(even) { background: #ededed; }
input[type="checkbox"] { appearance: none; flex: none; width: 8px; height: 8px; margin: 0; border: 1px solid #222; }
input[type="checkbox"]:checked { background: url("data:image/svg+xml,%3Csvg xmlns='http://www.w3.org/2000/svg' viewBox='0 0 8 8'%3E%3Cpath d='M1 3l2 3 4-6' fill='none' stroke='%23567'/%3E%3C/svg%3E"); }
.details { width: 227px; margin: -4px 0 0; padding: 4px 0 0 6px; border: 1px solid #111; min-inline-size: 0; }
.details legend { margin-left: -1px; }
.details dl { display: grid; grid-template-columns: 52px 1fr; }
.file-actions { display: flex; gap: 3px; margin-top: 3px; }
.file-actions .btn:nth-child(1) { width: 65px; }
.file-actions .btn:nth-child(2) { width: 74px; }
.file-actions .btn:nth-child(3) { width: 43px; margin-left: 20px; }
.hint { margin-top: 7px; color: #999; font-style: italic; }
.submit { display: flex; justify-content: flex-end; align-items: center; gap: 4px; margin-top: 2px; padding-right: 2px; }
.submit .save { width: 56px; }
.submit .cancel { width: 50px; }
.warn { color: #b45f06; }
.submit .warn { margin-top: 3px; }

/* Confirm delete dialog */
.confirm { left: 698px; top: 1117px; width: 346px; height: 83px; }
.confirm p { padding: 5px 7px 0; }
.confirm-foot { display: flex; justify-content: flex-end; align-items: center; gap: 5px; padding-right: 10px; }
.confirm-foot .btn { width: 37px; }
.confirm-foot .warn { margin-top: 7px; }

/* Select appliances dialog */
.modal { position: absolute; left: 1660px; top: 1027px; width: 216px; height: 440px; background: #fff; border: 1px solid #333; border-bottom-width: 2px; }
.modal h4 { height: 13px; padding-left: 2px; line-height: 12px; border-bottom: 1px solid #555; }
.modal-intro { height: 47px; padding: 2px 4px; }
.modal-scroll { position: relative; height: 329px; padding: 7px 16px 0 6px; border: solid #aaa; border-width: 1px 0; }
.modal-scroll .scroll { top: 0; right: 0; }
.filter { display: flex; align-items: center; height: 16px; padding-left: 1px; }
.filter label { width: 38px; }
.filter input, .filter select { width: 71px; height: 14px; padding: 0; background: #fff; border: 1px solid #222; border-radius: 0; }
.filter svg { margin-left: 5px; }
.filter select { appearance: none; background: url("data:image/svg+xml,%3Csvg xmlns='http://www.w3.org/2000/svg' width='10' height='12' viewBox='0 0 10 12'%3E%3Cpath d='M.5 0v12' stroke='%23222'/%3E%3Cpath d='M2 4h7L5.500 9z'/%3E%3C/svg%3E") right center no-repeat #fff; }
.all { display: block; margin: 10px 0 1px 1px; }
.modal-scroll h5 { display: flex; align-items: center; gap: 2px; width: 191px; height: 14px; margin-bottom: 2px; padding-left: 2px; background: #e6f1ff; border: 1px solid #222; }
.hosts { width: 189px; margin: 0 0 6px 2px; table-layout: fixed; border-collapse: collapse; }
.hosts th { height: 12px; padding: 0 3px; text-align: left; font-weight: normal; background: #ccc; }
.hosts td { height: 18px; padding: 0 3px; }
.hosts th:nth-child(1) { width: 18px; }
.hosts th:nth-child(2) { width: 43px; }
.hosts.mid th:nth-child(2) { width: 46px; }
.hosts.last th:nth-child(2) { width: 49px; }
.hosts th + th, .hosts td + td { border-left: 1px solid #222; }
.hosts input { display: block; }
.hosts .sel td { color: #5d7899; background: linear-gradient(#cfe2fb, #cfe2fb) 0 1px / 100% 15px no-repeat; }
.hosts .alt td { background: #ededed; }
.small { padding: 3px 8px 3px 0; text-align: right; font-size: 6px; line-height: 10px; }
.modal-foot { display: flex; justify-content: flex-end; gap: 5px; padding-right: 11px; }
.modal-foot .btn { width: 37px; }
.modal-foot .btn:first-child { width: 48px; }

/* Hover tooltip */
.tip { position: absolute; left: 523px; top: 350px; width: 142px; height: 36px; padding: 1px 3px; background: #fff; border: 1px solid #222; }

/* Connector layer */
.wires { position: absolute; left: 0; top: 0; pointer-events: none; }
.red path { fill: none; stroke: #e06666; stroke-width: 3; marker-end: url(#red-head); }
.gold path { fill: none; stroke: #f1c232; stroke-width: 3; marker-end: url(#gold-head); }
.squiggle path { fill: none; stroke: #f4878b; stroke-width: 2; }
```
